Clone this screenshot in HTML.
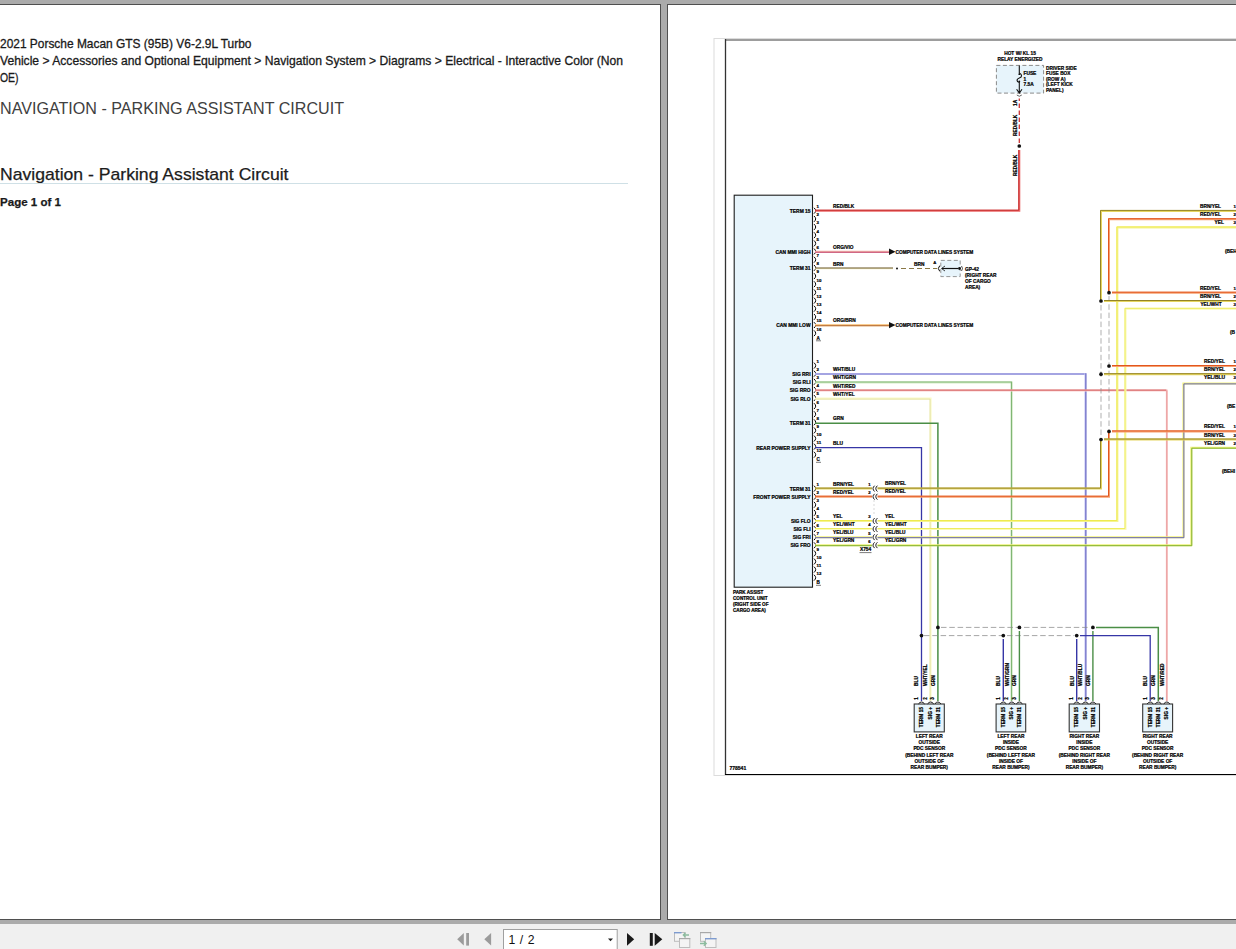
<!DOCTYPE html>
<html><head><meta charset="utf-8">
<style>
html,body{margin:0;padding:0;}
body{width:1236px;height:949px;overflow:hidden;position:relative;background:#ababab;font-family:"Liberation Sans", sans-serif;}
.pg{position:absolute;background:#fff;}
.dk{position:absolute;background:#4f4f4f;}
#tb{position:absolute;left:0;top:924px;width:1236px;height:25px;background:#f0f0f0;}
svg{position:absolute;left:0;top:0;}
svg text{font-family:"Liberation Sans", sans-serif;}
</style></head><body>
<div class="pg" style="left:0;top:5px;width:660px;height:914px"></div>
<div class="dk" style="left:0;top:4px;width:661px;height:1px"></div>
<div class="dk" style="left:660px;top:4px;width:1px;height:916px"></div>
<div class="dk" style="left:0;top:919px;width:661px;height:1px"></div>
<div class="pg" style="left:668px;top:5px;width:568px;height:914px"></div>
<div class="dk" style="left:667px;top:4px;width:569px;height:1px"></div>
<div class="dk" style="left:667px;top:4px;width:1px;height:916px"></div>
<div class="dk" style="left:667px;top:919px;width:569px;height:1px"></div>
<div id="tb"></div>
<svg width="1236" height="949" viewBox="0 0 1236 949">
<defs><clipPath id="pc"><rect x="668" y="5" width="568" height="914"/></clipPath></defs>
<g fill="#1a1a1a">
<text x="0" y="47.7" font-size="12.4" stroke="#1a1a1a" stroke-width="0.3" textLength="251.5" lengthAdjust="spacingAndGlyphs">2021 Porsche Macan GTS (95B) V6-2.9L Turbo</text>
<text x="0" y="64.7" font-size="12.4" stroke="#1a1a1a" stroke-width="0.3" textLength="623" lengthAdjust="spacingAndGlyphs">Vehicle &gt; Accessories and Optional Equipment &gt; Navigation System &gt; Diagrams &gt; Electrical - Interactive Color (Non</text>
<text x="0" y="82" font-size="12.4" stroke="#1a1a1a" stroke-width="0.3" textLength="18.5" lengthAdjust="spacingAndGlyphs">OE)</text>
<text x="0" y="113.7" font-size="16.6" fill="#404040" textLength="344" lengthAdjust="spacingAndGlyphs">NAVIGATION - PARKING ASSISTANT CIRCUIT</text>
<text x="0" y="179.8" font-size="16.6" fill="#1c1c1c" stroke="#1c1c1c" stroke-width="0.25" textLength="288.5" lengthAdjust="spacingAndGlyphs">Navigation - Parking Assistant Circuit</text>
<text x="0" y="205.7" font-size="11.2" font-weight="bold" fill="#1a1a1a" stroke="#1a1a1a" stroke-width="0.25" textLength="61" lengthAdjust="spacingAndGlyphs">Page 1 of 1</text>
</g>
<rect x="0" y="183" width="628" height="1" fill="#cfe0e6"/>
<g clip-path="url(#pc)">
<rect x="714" y="38.5" width="600" height="737" fill="none" stroke="#dcdcdc" stroke-width="1"/>
<rect x="725.5" y="39.5" width="600" height="735" fill="#fff" stroke="none"/>
<line x1="725.5" y1="39.9" x2="1240" y2="39.9" stroke="#7c7c7c" stroke-width="1.5" stroke-linecap="butt"/>
<line x1="725.5" y1="39" x2="725.5" y2="775.1" stroke="#333" stroke-width="1.3" stroke-linecap="butt"/>
<line x1="725" y1="774.5" x2="1240" y2="774.5" stroke="#000" stroke-width="1.15" stroke-linecap="butt"/>
<rect x="734.2" y="195.2" width="78.3" height="392" fill="#e7f4fb" stroke="#1e1e1e" stroke-width="1.1"/>
<text x="733" y="594" font-size="4.6" text-anchor="start" font-weight="bold" fill="#000" stroke="#000" stroke-width="0.22">PARK ASSIST</text>
<text x="733" y="600" font-size="4.6" text-anchor="start" font-weight="bold" fill="#000" stroke="#000" stroke-width="0.22">CONTROL UNIT</text>
<text x="733" y="606" font-size="4.6" text-anchor="start" font-weight="bold" fill="#000" stroke="#000" stroke-width="0.22">(RIGHT SIDE OF</text>
<text x="733" y="612" font-size="4.6" text-anchor="start" font-weight="bold" fill="#000" stroke="#000" stroke-width="0.22">CARGO AREA)</text>
<path d="M814.0,207.8 Q817.4,210.7 814.0,213.6" fill="none" stroke="#000" stroke-width="1.0"/>
<text x="816.5" y="208.1" font-size="4.4" text-anchor="start" font-weight="bold" fill="#000" stroke="#000" stroke-width="0.22">1</text>
<path d="M814.0,216.0 Q817.4,218.9 814.0,221.8" fill="none" stroke="#000" stroke-width="1.0"/>
<text x="816.5" y="216.26999999999998" font-size="4.4" text-anchor="start" font-weight="bold" fill="#000" stroke="#000" stroke-width="0.22">2</text>
<path d="M814.0,224.1 Q817.4,227.0 814.0,229.9" fill="none" stroke="#000" stroke-width="1.0"/>
<text x="816.5" y="224.44" font-size="4.4" text-anchor="start" font-weight="bold" fill="#000" stroke="#000" stroke-width="0.22">3</text>
<path d="M814.0,232.3 Q817.4,235.2 814.0,238.1" fill="none" stroke="#000" stroke-width="1.0"/>
<text x="816.5" y="232.60999999999999" font-size="4.4" text-anchor="start" font-weight="bold" fill="#000" stroke="#000" stroke-width="0.22">4</text>
<path d="M814.0,240.5 Q817.4,243.4 814.0,246.3" fill="none" stroke="#000" stroke-width="1.0"/>
<text x="816.5" y="240.78" font-size="4.4" text-anchor="start" font-weight="bold" fill="#000" stroke="#000" stroke-width="0.22">5</text>
<path d="M814.0,248.6 Q817.4,251.5 814.0,254.4" fill="none" stroke="#000" stroke-width="1.0"/>
<text x="816.5" y="248.95" font-size="4.4" text-anchor="start" font-weight="bold" fill="#000" stroke="#000" stroke-width="0.22">6</text>
<path d="M814.0,256.8 Q817.4,259.7 814.0,262.6" fill="none" stroke="#000" stroke-width="1.0"/>
<text x="816.5" y="257.11999999999995" font-size="4.4" text-anchor="start" font-weight="bold" fill="#000" stroke="#000" stroke-width="0.22">7</text>
<path d="M814.0,265.0 Q817.4,267.9 814.0,270.8" fill="none" stroke="#000" stroke-width="1.0"/>
<text x="816.5" y="265.28999999999996" font-size="4.4" text-anchor="start" font-weight="bold" fill="#000" stroke="#000" stroke-width="0.22">8</text>
<path d="M814.0,273.2 Q817.4,276.1 814.0,279.0" fill="none" stroke="#000" stroke-width="1.0"/>
<text x="816.5" y="273.46" font-size="4.4" text-anchor="start" font-weight="bold" fill="#000" stroke="#000" stroke-width="0.22">9</text>
<path d="M814.0,281.3 Q817.4,284.2 814.0,287.1" fill="none" stroke="#000" stroke-width="1.0"/>
<text x="816.5" y="281.63" font-size="4.4" text-anchor="start" font-weight="bold" fill="#000" stroke="#000" stroke-width="0.22">10</text>
<path d="M814.0,289.5 Q817.4,292.4 814.0,295.3" fill="none" stroke="#000" stroke-width="1.0"/>
<text x="816.5" y="289.79999999999995" font-size="4.4" text-anchor="start" font-weight="bold" fill="#000" stroke="#000" stroke-width="0.22">11</text>
<path d="M814.0,297.7 Q817.4,300.6 814.0,303.5" fill="none" stroke="#000" stroke-width="1.0"/>
<text x="816.5" y="297.96999999999997" font-size="4.4" text-anchor="start" font-weight="bold" fill="#000" stroke="#000" stroke-width="0.22">12</text>
<path d="M814.0,305.8 Q817.4,308.7 814.0,311.6" fill="none" stroke="#000" stroke-width="1.0"/>
<text x="816.5" y="306.14" font-size="4.4" text-anchor="start" font-weight="bold" fill="#000" stroke="#000" stroke-width="0.22">13</text>
<path d="M814.0,314.0 Q817.4,316.9 814.0,319.8" fill="none" stroke="#000" stroke-width="1.0"/>
<text x="816.5" y="314.30999999999995" font-size="4.4" text-anchor="start" font-weight="bold" fill="#000" stroke="#000" stroke-width="0.22">14</text>
<path d="M814.0,322.2 Q817.4,325.1 814.0,328.0" fill="none" stroke="#000" stroke-width="1.0"/>
<text x="816.5" y="322.47999999999996" font-size="4.4" text-anchor="start" font-weight="bold" fill="#000" stroke="#000" stroke-width="0.22">15</text>
<path d="M814.0,330.4 Q817.4,333.2 814.0,336.1" fill="none" stroke="#000" stroke-width="1.0"/>
<text x="816.5" y="330.65" font-size="4.4" text-anchor="start" font-weight="bold" fill="#000" stroke="#000" stroke-width="0.22">16</text>
<text x="816.5" y="339.95" font-size="4.6" text-anchor="start" font-weight="bold" fill="#000" stroke="#000" stroke-width="0.22">A</text>
<line x1="816" y1="340.8" x2="821" y2="340.8" stroke="#222" stroke-width="0.6"/>
<path d="M814.0,362.7 Q817.4,365.6 814.0,368.5" fill="none" stroke="#000" stroke-width="1.0"/>
<text x="816.5" y="363.0" font-size="4.4" text-anchor="start" font-weight="bold" fill="#000" stroke="#000" stroke-width="0.22">1</text>
<path d="M814.0,370.8 Q817.4,373.7 814.0,376.6" fill="none" stroke="#000" stroke-width="1.0"/>
<text x="816.5" y="371.1" font-size="4.4" text-anchor="start" font-weight="bold" fill="#000" stroke="#000" stroke-width="0.22">2</text>
<path d="M814.0,378.9 Q817.4,381.8 814.0,384.7" fill="none" stroke="#000" stroke-width="1.0"/>
<text x="816.5" y="379.2" font-size="4.4" text-anchor="start" font-weight="bold" fill="#000" stroke="#000" stroke-width="0.22">3</text>
<path d="M814.0,387.0 Q817.4,389.9 814.0,392.8" fill="none" stroke="#000" stroke-width="1.0"/>
<text x="816.5" y="387.3" font-size="4.4" text-anchor="start" font-weight="bold" fill="#000" stroke="#000" stroke-width="0.22">4</text>
<path d="M814.0,395.1 Q817.4,398.0 814.0,400.9" fill="none" stroke="#000" stroke-width="1.0"/>
<text x="816.5" y="395.4" font-size="4.4" text-anchor="start" font-weight="bold" fill="#000" stroke="#000" stroke-width="0.22">5</text>
<path d="M814.0,403.2 Q817.4,406.1 814.0,409.0" fill="none" stroke="#000" stroke-width="1.0"/>
<text x="816.5" y="403.5" font-size="4.4" text-anchor="start" font-weight="bold" fill="#000" stroke="#000" stroke-width="0.22">6</text>
<path d="M814.0,411.3 Q817.4,414.2 814.0,417.1" fill="none" stroke="#000" stroke-width="1.0"/>
<text x="816.5" y="411.6" font-size="4.4" text-anchor="start" font-weight="bold" fill="#000" stroke="#000" stroke-width="0.22">7</text>
<path d="M814.0,419.4 Q817.4,422.3 814.0,425.2" fill="none" stroke="#000" stroke-width="1.0"/>
<text x="816.5" y="419.7" font-size="4.4" text-anchor="start" font-weight="bold" fill="#000" stroke="#000" stroke-width="0.22">8</text>
<path d="M814.0,427.5 Q817.4,430.4 814.0,433.3" fill="none" stroke="#000" stroke-width="1.0"/>
<text x="816.5" y="427.8" font-size="4.4" text-anchor="start" font-weight="bold" fill="#000" stroke="#000" stroke-width="0.22">9</text>
<path d="M814.0,435.6 Q817.4,438.5 814.0,441.4" fill="none" stroke="#000" stroke-width="1.0"/>
<text x="816.5" y="435.9" font-size="4.4" text-anchor="start" font-weight="bold" fill="#000" stroke="#000" stroke-width="0.22">10</text>
<path d="M814.0,443.7 Q817.4,446.6 814.0,449.5" fill="none" stroke="#000" stroke-width="1.0"/>
<text x="816.5" y="444.0" font-size="4.4" text-anchor="start" font-weight="bold" fill="#000" stroke="#000" stroke-width="0.22">11</text>
<path d="M814.0,451.8 Q817.4,454.7 814.0,457.6" fill="none" stroke="#000" stroke-width="1.0"/>
<text x="816.5" y="452.1" font-size="4.4" text-anchor="start" font-weight="bold" fill="#000" stroke="#000" stroke-width="0.22">12</text>
<text x="816.5" y="461.40000000000003" font-size="4.6" text-anchor="start" font-weight="bold" fill="#000" stroke="#000" stroke-width="0.22">C</text>
<line x1="816" y1="462.3" x2="821" y2="462.3" stroke="#222" stroke-width="0.6"/>
<path d="M814.0,485.7 Q817.4,488.6 814.0,491.5" fill="none" stroke="#000" stroke-width="1.0"/>
<text x="816.5" y="486.0" font-size="4.4" text-anchor="start" font-weight="bold" fill="#000" stroke="#000" stroke-width="0.22">1</text>
<path d="M814.0,493.8 Q817.4,496.7 814.0,499.6" fill="none" stroke="#000" stroke-width="1.0"/>
<text x="816.5" y="494.1" font-size="4.4" text-anchor="start" font-weight="bold" fill="#000" stroke="#000" stroke-width="0.22">2</text>
<path d="M814.0,501.9 Q817.4,504.8 814.0,507.7" fill="none" stroke="#000" stroke-width="1.0"/>
<text x="816.5" y="502.2" font-size="4.4" text-anchor="start" font-weight="bold" fill="#000" stroke="#000" stroke-width="0.22">3</text>
<path d="M814.0,510.0 Q817.4,512.9 814.0,515.8" fill="none" stroke="#000" stroke-width="1.0"/>
<text x="816.5" y="510.29999999999995" font-size="4.4" text-anchor="start" font-weight="bold" fill="#000" stroke="#000" stroke-width="0.22">4</text>
<path d="M814.0,518.1 Q817.4,521.0 814.0,523.9" fill="none" stroke="#000" stroke-width="1.0"/>
<text x="816.5" y="518.4" font-size="4.4" text-anchor="start" font-weight="bold" fill="#000" stroke="#000" stroke-width="0.22">5</text>
<path d="M814.0,526.2 Q817.4,529.1 814.0,532.0" fill="none" stroke="#000" stroke-width="1.0"/>
<text x="816.5" y="526.5" font-size="4.4" text-anchor="start" font-weight="bold" fill="#000" stroke="#000" stroke-width="0.22">6</text>
<path d="M814.0,534.3 Q817.4,537.2 814.0,540.1" fill="none" stroke="#000" stroke-width="1.0"/>
<text x="816.5" y="534.6" font-size="4.4" text-anchor="start" font-weight="bold" fill="#000" stroke="#000" stroke-width="0.22">7</text>
<path d="M814.0,542.4 Q817.4,545.3 814.0,548.2" fill="none" stroke="#000" stroke-width="1.0"/>
<text x="816.5" y="542.7" font-size="4.4" text-anchor="start" font-weight="bold" fill="#000" stroke="#000" stroke-width="0.22">8</text>
<path d="M814.0,550.5 Q817.4,553.4 814.0,556.3" fill="none" stroke="#000" stroke-width="1.0"/>
<text x="816.5" y="550.8" font-size="4.4" text-anchor="start" font-weight="bold" fill="#000" stroke="#000" stroke-width="0.22">9</text>
<path d="M814.0,558.6 Q817.4,561.5 814.0,564.4" fill="none" stroke="#000" stroke-width="1.0"/>
<text x="816.5" y="558.9" font-size="4.4" text-anchor="start" font-weight="bold" fill="#000" stroke="#000" stroke-width="0.22">10</text>
<path d="M814.0,566.7 Q817.4,569.6 814.0,572.5" fill="none" stroke="#000" stroke-width="1.0"/>
<text x="816.5" y="567.0" font-size="4.4" text-anchor="start" font-weight="bold" fill="#000" stroke="#000" stroke-width="0.22">11</text>
<path d="M814.0,574.8 Q817.4,577.7 814.0,580.6" fill="none" stroke="#000" stroke-width="1.0"/>
<text x="816.5" y="575.1" font-size="4.4" text-anchor="start" font-weight="bold" fill="#000" stroke="#000" stroke-width="0.22">12</text>
<text x="816.5" y="584.4000000000001" font-size="4.6" text-anchor="start" font-weight="bold" fill="#000" stroke="#000" stroke-width="0.22">B</text>
<line x1="816" y1="585.3" x2="821" y2="585.3" stroke="#222" stroke-width="0.6"/>
<text x="810.5" y="212.6" font-size="4.9" text-anchor="end" font-weight="bold" fill="#000" stroke="#000" stroke-width="0.22">TERM 15</text>
<text x="810.5" y="253.70000000000002" font-size="4.9" text-anchor="end" font-weight="bold" fill="#000" stroke="#000" stroke-width="0.22">CAN MMI HIGH</text>
<text x="810.5" y="270.4" font-size="4.9" text-anchor="end" font-weight="bold" fill="#000" stroke="#000" stroke-width="0.22">TERM 31</text>
<text x="810.5" y="327.0" font-size="4.9" text-anchor="end" font-weight="bold" fill="#000" stroke="#000" stroke-width="0.22">CAN MMI LOW</text>
<text x="810.5" y="375.9" font-size="4.9" text-anchor="end" font-weight="bold" fill="#000" stroke="#000" stroke-width="0.22">SIG RRI</text>
<text x="810.5" y="384.29999999999995" font-size="4.9" text-anchor="end" font-weight="bold" fill="#000" stroke="#000" stroke-width="0.22">SIG RLI</text>
<text x="810.5" y="392.4" font-size="4.9" text-anchor="end" font-weight="bold" fill="#000" stroke="#000" stroke-width="0.22">SIG RRO</text>
<text x="810.5" y="400.5" font-size="4.9" text-anchor="end" font-weight="bold" fill="#000" stroke="#000" stroke-width="0.22">SIG RLO</text>
<text x="810.5" y="425.2" font-size="4.9" text-anchor="end" font-weight="bold" fill="#000" stroke="#000" stroke-width="0.22">TERM 31</text>
<text x="810.5" y="449.5" font-size="4.9" text-anchor="end" font-weight="bold" fill="#000" stroke="#000" stroke-width="0.22">REAR POWER SUPPLY</text>
<text x="810.5" y="490.5" font-size="4.9" text-anchor="end" font-weight="bold" fill="#000" stroke="#000" stroke-width="0.22">TERM 31</text>
<text x="810.5" y="498.59999999999997" font-size="4.9" text-anchor="end" font-weight="bold" fill="#000" stroke="#000" stroke-width="0.22">FRONT POWER SUPPLY</text>
<text x="810.5" y="522.9" font-size="4.9" text-anchor="end" font-weight="bold" fill="#000" stroke="#000" stroke-width="0.22">SIG FLO</text>
<text x="810.5" y="530.9" font-size="4.9" text-anchor="end" font-weight="bold" fill="#000" stroke="#000" stroke-width="0.22">SIG FLI</text>
<text x="810.5" y="539.1" font-size="4.9" text-anchor="end" font-weight="bold" fill="#000" stroke="#000" stroke-width="0.22">SIG FRI</text>
<text x="810.5" y="547.1" font-size="4.9" text-anchor="end" font-weight="bold" fill="#000" stroke="#000" stroke-width="0.22">SIG FRO</text>
<polyline points="815,210.7 1019.3,210.7 1019.3,150" fill="none" stroke="#ec6a6a" stroke-width="2.0" stroke-linejoin="miter"/>
<polyline points="815.0,210.2 1018.8,210.2 1018.8,150.0" fill="none" stroke="#c42a2a" stroke-width="1.0" stroke-linejoin="miter"/>
<line x1="1019.3" y1="143" x2="1019.3" y2="98.5" stroke="#cc3434" stroke-width="1.3" stroke-dasharray="4.5,2.5" stroke-linecap="butt"/>
<circle cx="1019.3" cy="146" r="1.85" fill="#111"/>
<text x="833" y="207.5" font-size="4.8" text-anchor="start" font-weight="bold" fill="#000" stroke="#000" stroke-width="0.22">RED/BLK</text>
<polyline points="815,251.8 889,251.8" fill="none" stroke="#f2b4a8" stroke-width="2.2" stroke-linejoin="miter"/>
<polyline points="815.0,252.3 889.0,252.3" fill="none" stroke="#c44e7a" stroke-width="1.1" stroke-linejoin="miter"/>
<path d="M889,248.6 L895.5,251.8 L889,255 Z" fill="#111"/>
<text x="895.5" y="253.8" font-size="4.8" text-anchor="start" font-weight="bold" fill="#000" stroke="#000" stroke-width="0.22">COMPUTER DATA LINES SYSTEM</text>
<text x="833" y="249" font-size="4.8" text-anchor="start" font-weight="bold" fill="#000" stroke="#000" stroke-width="0.22">ORG/VIO</text>
<polyline points="815,268.5 893,268.5" fill="none" stroke="#f4f0c4" stroke-width="1.6" stroke-linejoin="miter"/>
<polyline points="815.0,268.0 893.0,268.0" fill="none" stroke="#6a5830" stroke-width="1.1" stroke-linejoin="miter"/>
<circle cx="897" cy="268.5" r="1.0" fill="#111"/>
<line x1="901" y1="268.5" x2="937" y2="268.5" stroke="#8a7846" stroke-width="1.1" stroke-dasharray="5,3" stroke-linecap="butt"/>
<text x="833" y="265.5" font-size="4.8" text-anchor="start" font-weight="bold" fill="#000" stroke="#000" stroke-width="0.22">BRN</text>
<text x="914" y="266" font-size="4.8" text-anchor="start" font-weight="bold" fill="#000" stroke="#000" stroke-width="0.22">BRN</text>
<text x="933.2" y="264" font-size="4.2" text-anchor="start" font-weight="bold" fill="#000" stroke="#000" stroke-width="0.22">A</text>
<path d="M939.8,265.6 Q936.8,268.5 939.8,271.4" fill="none" stroke="#000" stroke-width="1.0"/>
<rect x="940.8" y="260.4" width="19.4" height="16.2" fill="#e7f4fb" stroke="#8a8a8a" stroke-width="0.9" stroke-dasharray="4,2.5"/>
<line x1="942" y1="268.5" x2="958" y2="268.5" stroke="#111" stroke-width="1.2" stroke-linecap="butt"/>
<path d="M945,266 L941.5,268.5 L945,271" fill="none" stroke="#111" stroke-width="0.8"/>
<circle cx="959.5" cy="268.5" r="1.4" fill="#111"/>
<path d="M961.5,266 Q963.5,268.5 961.5,271" fill="none" stroke="#222" stroke-width="0.8"/>
<text x="965" y="270.5" font-size="4.8" text-anchor="start" font-weight="bold" fill="#000" stroke="#000" stroke-width="0.22">GP-42</text>
<text x="965" y="276.6" font-size="4.8" text-anchor="start" font-weight="bold" fill="#000" stroke="#000" stroke-width="0.22">(RIGHT REAR</text>
<text x="965" y="282.7" font-size="4.8" text-anchor="start" font-weight="bold" fill="#000" stroke="#000" stroke-width="0.22">OF CARGO</text>
<text x="965" y="288.8" font-size="4.8" text-anchor="start" font-weight="bold" fill="#000" stroke="#000" stroke-width="0.22">AREA)</text>
<polyline points="815,325.1 889,325.1" fill="none" stroke="#f8cc90" stroke-width="2.2" stroke-linejoin="miter"/>
<polyline points="815.0,325.6 889.0,325.6" fill="none" stroke="#c27c42" stroke-width="1.2" stroke-linejoin="miter"/>
<path d="M889,321.9 L895.5,325.1 L889,328.3 Z" fill="#111"/>
<text x="895.5" y="327.1" font-size="4.8" text-anchor="start" font-weight="bold" fill="#000" stroke="#000" stroke-width="0.22">COMPUTER DATA LINES SYSTEM</text>
<text x="833" y="322" font-size="4.8" text-anchor="start" font-weight="bold" fill="#000" stroke="#000" stroke-width="0.22">ORG/BRN</text>
<polyline points="815,374 1085.4,374" fill="none" stroke="#a4a4e2" stroke-width="1.9" stroke-linejoin="miter"/>
<polyline points="1085.4,373.2 1085.4,701" fill="none" stroke="#c8c8f6" stroke-width="2.0" stroke-linejoin="miter"/>
<line x1="1085.9" y1="373.2" x2="1085.9" y2="701" stroke="#5858b8" stroke-width="1.0" stroke-linecap="butt"/>
<polyline points="815,382.4 1011.8,382.4 1011.8,701" fill="none" stroke="#d4ecc8" stroke-width="2.0" stroke-linejoin="miter"/>
<polyline points="815,382.0 1011.4,382.0 1011.4,701" fill="none" stroke="#7cb470" stroke-width="1.1" stroke-linejoin="miter"/>
<polyline points="815,390.5 1166.8,390.5 1166.8,701" fill="none" stroke="#fad0d0" stroke-width="2.0" stroke-linejoin="miter"/>
<polyline points="815,390.1 1166.4,390.1" fill="none" stroke="#d86a6a" stroke-width="1.1" stroke-linejoin="miter"/>
<line x1="1166.8" y1="390.5" x2="1166.8" y2="701" stroke="#eaa0a0" stroke-width="1.3" stroke-linecap="butt"/>
<polyline points="815,398.6 930.6,398.6 930.6,701" fill="none" stroke="#fafac8" stroke-width="2.0" stroke-linejoin="miter"/>
<polyline points="815.0,399.1 930.1,399.1 930.1,701.0" fill="none" stroke="#e4e2a6" stroke-width="1.0" stroke-linejoin="miter"/>
<polyline points="815,423.3 937.9,423.3 937.9,701" fill="none" stroke="#4a8e46" stroke-width="1.5" stroke-linejoin="miter"/>
<polyline points="815,447.6 921.5,447.6 921.5,701" fill="none" stroke="#3636a6" stroke-width="1.3" stroke-linejoin="miter"/>
<text x="833" y="370.5" font-size="4.8" text-anchor="start" font-weight="bold" fill="#000" stroke="#000" stroke-width="0.22">WHT/BLU</text>
<text x="833" y="379" font-size="4.8" text-anchor="start" font-weight="bold" fill="#000" stroke="#000" stroke-width="0.22">WHT/GRN</text>
<text x="833" y="387.5" font-size="4.8" text-anchor="start" font-weight="bold" fill="#000" stroke="#000" stroke-width="0.22">WHT/RED</text>
<text x="833" y="395.5" font-size="4.8" text-anchor="start" font-weight="bold" fill="#000" stroke="#000" stroke-width="0.22">WHT/YEL</text>
<text x="833" y="420" font-size="4.8" text-anchor="start" font-weight="bold" fill="#000" stroke="#000" stroke-width="0.22">GRN</text>
<text x="833" y="444.5" font-size="4.8" text-anchor="start" font-weight="bold" fill="#000" stroke="#000" stroke-width="0.22">BLU</text>
<polyline points="815,488.6 1101,488.6 1101,439.5" fill="none" stroke="#e6d660" stroke-width="2.0" stroke-linejoin="miter"/>
<polyline points="815.0,488.1 1100.5,488.1 1100.5,439.5" fill="none" stroke="#948428" stroke-width="1.0" stroke-linejoin="miter"/>
<polyline points="815,496.7 1109,496.7 1109,431.4" fill="none" stroke="#f6a070" stroke-width="2.0" stroke-linejoin="miter"/>
<polyline points="815.0,496.2 1108.5,496.2 1108.5,431.4" fill="none" stroke="#e2561e" stroke-width="1.0" stroke-linejoin="miter"/>
<polyline points="815,521 1117.4,521 1117.4,227.4 1240,227.4" fill="none" stroke="#f6f490" stroke-width="2.0" stroke-linejoin="miter"/>
<polyline points="815.0,520.5 1116.9,520.5 1116.9,226.9 1240.0,226.9" fill="none" stroke="#eeea50" stroke-width="1.0" stroke-linejoin="miter"/>
<polyline points="815,529 1125.5,529 1125.5,308.8 1240,308.8" fill="none" stroke="#fafab4" stroke-width="2.0" stroke-linejoin="miter"/>
<polyline points="815.0,528.5 1125.0,528.5 1125.0,308.3 1240.0,308.3" fill="none" stroke="#eeec60" stroke-width="1.0" stroke-linejoin="miter"/>
<polyline points="815,537.2 1183.4,537.2 1183.4,383.4 1240,383.4" fill="none" stroke="#f4f27a" stroke-width="2.0" stroke-linejoin="miter"/>
<polyline points="815.0,537.7 1183.9,537.7 1183.9,383.9 1240.0,383.9" fill="none" stroke="#6464b4" stroke-width="1.0" stroke-linejoin="miter"/>
<polyline points="815,545.2 1191.3,545.2 1191.3,447.7 1240,447.7" fill="none" stroke="#eef27a" stroke-width="2.0" stroke-linejoin="miter"/>
<polyline points="815.0,545.7 1191.8,545.7 1191.8,448.2 1240.0,448.2" fill="none" stroke="#80b030" stroke-width="1.0" stroke-linejoin="miter"/>
<line x1="1101" y1="305" x2="1101" y2="436" stroke="#8c8c8c" stroke-width="0.7" stroke-dasharray="5.5,2.8" stroke-linecap="butt"/>
<line x1="1109" y1="296" x2="1109" y2="428" stroke="#8c8c8c" stroke-width="0.7" stroke-dasharray="5.5,2.8" stroke-linecap="butt"/>
<polyline points="1101,301 1101,210.9 1240,210.9" fill="none" stroke="#e6d660" stroke-width="2.0" stroke-linejoin="miter"/>
<polyline points="1100.5,301.0 1100.5,210.4 1240.0,210.4" fill="none" stroke="#948428" stroke-width="1.0" stroke-linejoin="miter"/>
<polyline points="1109,292.7 1109,219.2 1240,219.2" fill="none" stroke="#f6a070" stroke-width="2.0" stroke-linejoin="miter"/>
<polyline points="1108.5,292.7 1108.5,218.7 1240.0,218.7" fill="none" stroke="#e2561e" stroke-width="1.0" stroke-linejoin="miter"/>
<polyline points="1104,301 1240,301" fill="none" stroke="#e6d660" stroke-width="2.0" stroke-linejoin="miter"/>
<polyline points="1104.0,300.5 1240.0,300.5" fill="none" stroke="#948428" stroke-width="1.0" stroke-linejoin="miter"/>
<circle cx="1101" cy="301" r="1.85" fill="#111"/>
<polyline points="1104,374.2 1240,374.2" fill="none" stroke="#e6d660" stroke-width="2.0" stroke-linejoin="miter"/>
<polyline points="1104.0,373.7 1240.0,373.7" fill="none" stroke="#948428" stroke-width="1.0" stroke-linejoin="miter"/>
<circle cx="1101" cy="374.2" r="1.85" fill="#111"/>
<polyline points="1104,439.5 1240,439.5" fill="none" stroke="#e6d660" stroke-width="2.0" stroke-linejoin="miter"/>
<polyline points="1104.0,439.0 1240.0,439.0" fill="none" stroke="#948428" stroke-width="1.0" stroke-linejoin="miter"/>
<circle cx="1101" cy="439.5" r="1.85" fill="#111"/>
<polyline points="1112,292.7 1240,292.7" fill="none" stroke="#f6a070" stroke-width="2.0" stroke-linejoin="miter"/>
<polyline points="1112.0,292.2 1240.0,292.2" fill="none" stroke="#e2561e" stroke-width="1.0" stroke-linejoin="miter"/>
<circle cx="1109" cy="292.7" r="1.85" fill="#111"/>
<polyline points="1112,366 1240,366" fill="none" stroke="#f6a070" stroke-width="2.0" stroke-linejoin="miter"/>
<polyline points="1112.0,365.5 1240.0,365.5" fill="none" stroke="#e2561e" stroke-width="1.0" stroke-linejoin="miter"/>
<circle cx="1109" cy="366" r="1.85" fill="#111"/>
<polyline points="1112,431.4 1240,431.4" fill="none" stroke="#f6a070" stroke-width="2.0" stroke-linejoin="miter"/>
<polyline points="1112.0,430.9 1240.0,430.9" fill="none" stroke="#e2561e" stroke-width="1.0" stroke-linejoin="miter"/>
<circle cx="1109" cy="431.4" r="1.85" fill="#111"/>
<text x="833" y="485.5" font-size="4.8" text-anchor="start" font-weight="bold" fill="#000" stroke="#000" stroke-width="0.22">BRN/YEL</text>
<text x="885" y="485.0" font-size="4.8" text-anchor="start" font-weight="bold" fill="#000" stroke="#000" stroke-width="0.22">BRN/YEL</text>
<text x="833" y="493.5" font-size="4.8" text-anchor="start" font-weight="bold" fill="#000" stroke="#000" stroke-width="0.22">RED/YEL</text>
<text x="885" y="493.0" font-size="4.8" text-anchor="start" font-weight="bold" fill="#000" stroke="#000" stroke-width="0.22">RED/YEL</text>
<text x="833" y="518" font-size="4.8" text-anchor="start" font-weight="bold" fill="#000" stroke="#000" stroke-width="0.22">YEL</text>
<text x="885" y="517.5" font-size="4.8" text-anchor="start" font-weight="bold" fill="#000" stroke="#000" stroke-width="0.22">YEL</text>
<text x="833" y="526" font-size="4.8" text-anchor="start" font-weight="bold" fill="#000" stroke="#000" stroke-width="0.22">YEL/WHT</text>
<text x="885" y="525.5" font-size="4.8" text-anchor="start" font-weight="bold" fill="#000" stroke="#000" stroke-width="0.22">YEL/WHT</text>
<text x="833" y="534.2" font-size="4.8" text-anchor="start" font-weight="bold" fill="#000" stroke="#000" stroke-width="0.22">YEL/BLU</text>
<text x="885" y="533.7" font-size="4.8" text-anchor="start" font-weight="bold" fill="#000" stroke="#000" stroke-width="0.22">YEL/BLU</text>
<text x="833" y="542.2" font-size="4.8" text-anchor="start" font-weight="bold" fill="#000" stroke="#000" stroke-width="0.22">YEL/GRN</text>
<text x="885" y="541.7" font-size="4.8" text-anchor="start" font-weight="bold" fill="#000" stroke="#000" stroke-width="0.22">YEL/GRN</text>
<text x="868.2" y="485.8" font-size="4.2" text-anchor="start" font-weight="bold" fill="#000" stroke="#000" stroke-width="0.22">1</text>
<text x="868.2" y="493.8" font-size="4.2" text-anchor="start" font-weight="bold" fill="#000" stroke="#000" stroke-width="0.22">2</text>
<text x="868.2" y="518.3" font-size="4.2" text-anchor="start" font-weight="bold" fill="#000" stroke="#000" stroke-width="0.22">3</text>
<text x="868.2" y="526.3" font-size="4.2" text-anchor="start" font-weight="bold" fill="#000" stroke="#000" stroke-width="0.22">4</text>
<text x="868.2" y="534.5" font-size="4.2" text-anchor="start" font-weight="bold" fill="#000" stroke="#000" stroke-width="0.22">5</text>
<text x="868.2" y="542.5" font-size="4.2" text-anchor="start" font-weight="bold" fill="#000" stroke="#000" stroke-width="0.22">6</text>
<rect x="872" y="487.1" width="5.5" height="3" fill="#fff"/>
<path d="M874.6,485.7 Q871.4,488.6 874.6,491.5 M877.4,485.7 Q874.2,488.6 877.4,491.5" fill="none" stroke="#000" stroke-width="0.9"/>
<rect x="872" y="495.2" width="5.5" height="3" fill="#fff"/>
<path d="M874.6,493.8 Q871.4,496.7 874.6,499.6 M877.4,493.8 Q874.2,496.7 877.4,499.6" fill="none" stroke="#000" stroke-width="0.9"/>
<rect x="872" y="519.5" width="5.5" height="3" fill="#fff"/>
<path d="M874.6,518.1 Q871.4,521.0 874.6,523.9 M877.4,518.1 Q874.2,521.0 877.4,523.9" fill="none" stroke="#000" stroke-width="0.9"/>
<rect x="872" y="527.5" width="5.5" height="3" fill="#fff"/>
<path d="M874.6,526.1 Q871.4,529.0 874.6,531.9 M877.4,526.1 Q874.2,529.0 877.4,531.9" fill="none" stroke="#000" stroke-width="0.9"/>
<rect x="872" y="535.7" width="5.5" height="3" fill="#fff"/>
<path d="M874.6,534.3 Q871.4,537.2 874.6,540.1 M877.4,534.3 Q874.2,537.2 877.4,540.1" fill="none" stroke="#000" stroke-width="0.9"/>
<rect x="872" y="543.7" width="5.5" height="3" fill="#fff"/>
<path d="M874.6,542.3 Q871.4,545.2 874.6,548.1 M877.4,542.3 Q874.2,545.2 877.4,548.1" fill="none" stroke="#000" stroke-width="0.9"/>
<line x1="874" y1="500" x2="874" y2="516" stroke="#c8c8c8" stroke-width="0.7" stroke-dasharray="2,2" stroke-linecap="butt"/>
<text x="860" y="551" font-size="4.8" text-anchor="start" font-weight="bold" fill="#000" stroke="#000" stroke-width="0.22">X754</text>
<line x1="859.5" y1="552.6" x2="871.5" y2="552.6" stroke="#222" stroke-width="0.6" stroke-linecap="butt"/>
<text x="1200" y="207.9" font-size="4.8" text-anchor="start" font-weight="bold" fill="#000" stroke="#000" stroke-width="0.22" textLength="21" lengthAdjust="spacingAndGlyphs">BRN/YEL</text>
<text x="1200" y="215.9" font-size="4.8" text-anchor="start" font-weight="bold" fill="#000" stroke="#000" stroke-width="0.22" textLength="21" lengthAdjust="spacingAndGlyphs">RED/YEL</text>
<text x="1200" y="289.9" font-size="4.8" text-anchor="start" font-weight="bold" fill="#000" stroke="#000" stroke-width="0.22" textLength="21" lengthAdjust="spacingAndGlyphs">RED/YEL</text>
<text x="1200" y="297.9" font-size="4.8" text-anchor="start" font-weight="bold" fill="#000" stroke="#000" stroke-width="0.22" textLength="21" lengthAdjust="spacingAndGlyphs">BRN/YEL</text>
<text x="1200.5" y="305.7" font-size="4.8" text-anchor="start" font-weight="bold" fill="#000" stroke="#000" stroke-width="0.22" textLength="21" lengthAdjust="spacingAndGlyphs">YEL/WHT</text>
<text x="1204" y="362.8" font-size="4.8" text-anchor="start" font-weight="bold" fill="#000" stroke="#000" stroke-width="0.22" textLength="21" lengthAdjust="spacingAndGlyphs">RED/YEL</text>
<text x="1204" y="370.8" font-size="4.8" text-anchor="start" font-weight="bold" fill="#000" stroke="#000" stroke-width="0.22" textLength="21" lengthAdjust="spacingAndGlyphs">BRN/YEL</text>
<text x="1204" y="379" font-size="4.8" text-anchor="start" font-weight="bold" fill="#000" stroke="#000" stroke-width="0.22" textLength="21" lengthAdjust="spacingAndGlyphs">YEL/BLU</text>
<text x="1204" y="427.9" font-size="4.8" text-anchor="start" font-weight="bold" fill="#000" stroke="#000" stroke-width="0.22" textLength="21" lengthAdjust="spacingAndGlyphs">RED/YEL</text>
<text x="1204" y="436.8" font-size="4.8" text-anchor="start" font-weight="bold" fill="#000" stroke="#000" stroke-width="0.22" textLength="21" lengthAdjust="spacingAndGlyphs">BRN/YEL</text>
<text x="1204" y="444.8" font-size="4.8" text-anchor="start" font-weight="bold" fill="#000" stroke="#000" stroke-width="0.22" textLength="21" lengthAdjust="spacingAndGlyphs">YEL/GRN</text>
<text x="1233.5" y="207.9" font-size="4.4" text-anchor="start" font-weight="bold" fill="#000" stroke="#000" stroke-width="0.22">1</text>
<text x="1233.5" y="215.9" font-size="4.4" text-anchor="start" font-weight="bold" fill="#000" stroke="#000" stroke-width="0.22">2</text>
<text x="1233.5" y="223.7" font-size="4.4" text-anchor="start" font-weight="bold" fill="#000" stroke="#000" stroke-width="0.22">3</text>
<text x="1233.5" y="289.9" font-size="4.4" text-anchor="start" font-weight="bold" fill="#000" stroke="#000" stroke-width="0.22">1</text>
<text x="1233.5" y="297.9" font-size="4.4" text-anchor="start" font-weight="bold" fill="#000" stroke="#000" stroke-width="0.22">2</text>
<text x="1233.5" y="305.7" font-size="4.4" text-anchor="start" font-weight="bold" fill="#000" stroke="#000" stroke-width="0.22">3</text>
<text x="1233.5" y="362.8" font-size="4.4" text-anchor="start" font-weight="bold" fill="#000" stroke="#000" stroke-width="0.22">1</text>
<text x="1233.5" y="370.8" font-size="4.4" text-anchor="start" font-weight="bold" fill="#000" stroke="#000" stroke-width="0.22">2</text>
<text x="1233.5" y="379" font-size="4.4" text-anchor="start" font-weight="bold" fill="#000" stroke="#000" stroke-width="0.22">3</text>
<text x="1233.5" y="427.9" font-size="4.4" text-anchor="start" font-weight="bold" fill="#000" stroke="#000" stroke-width="0.22">1</text>
<text x="1233.5" y="436.8" font-size="4.4" text-anchor="start" font-weight="bold" fill="#000" stroke="#000" stroke-width="0.22">3</text>
<text x="1233.5" y="444.8" font-size="4.4" text-anchor="start" font-weight="bold" fill="#000" stroke="#000" stroke-width="0.22">2</text>
<text x="1223.9" y="223.7" font-size="4.8" text-anchor="end" font-weight="bold" fill="#000" stroke="#000" stroke-width="0.22">YEL</text>
<text x="1225" y="252.5" font-size="4.8" text-anchor="start" font-weight="bold" fill="#000" stroke="#000" stroke-width="0.22">(BEH</text>
<text x="1230" y="333.5" font-size="4.8" text-anchor="start" font-weight="bold" fill="#000" stroke="#000" stroke-width="0.22">(B</text>
<text x="1227" y="407.5" font-size="4.8" text-anchor="start" font-weight="bold" fill="#000" stroke="#000" stroke-width="0.22">(BE</text>
<text x="1222" y="472.5" font-size="4.8" text-anchor="start" font-weight="bold" fill="#000" stroke="#000" stroke-width="0.22">(BEHI</text>
<line x1="941" y1="627.4" x2="1090" y2="627.4" stroke="#888" stroke-width="0.75" stroke-dasharray="5.5,2.8" stroke-linecap="butt"/>
<line x1="924" y1="635.6" x2="1074" y2="635.6" stroke="#888" stroke-width="0.75" stroke-dasharray="5.5,2.8" stroke-linecap="butt"/>
<circle cx="937.9" cy="627.4" r="1.85" fill="#111"/>
<circle cx="921.5" cy="635.6" r="1.85" fill="#111"/>
<circle cx="1019.4" cy="627.4" r="1.85" fill="#111"/>
<circle cx="1003.3" cy="635.6" r="1.85" fill="#111"/>
<circle cx="1092.9" cy="627.4" r="1.85" fill="#111"/>
<circle cx="1076.7" cy="635.6" r="1.85" fill="#111"/>
<line x1="1003.3" y1="639" x2="1003.3" y2="701" stroke="#3636a6" stroke-width="1.4" stroke-linecap="butt"/>
<line x1="1019.4" y1="631" x2="1019.4" y2="701" stroke="#4a8e46" stroke-width="1.4" stroke-linecap="butt"/>
<line x1="1076.7" y1="639" x2="1076.7" y2="701" stroke="#3636a6" stroke-width="1.4" stroke-linecap="butt"/>
<line x1="1092.9" y1="631" x2="1092.9" y2="701" stroke="#4a8e46" stroke-width="1.4" stroke-linecap="butt"/>
<polyline points="1080,635.6 1150.2,635.6 1150.2,701" fill="none" stroke="#3636a6" stroke-width="1.3" stroke-linejoin="miter"/>
<polyline points="1096,627.4 1158.3,627.4 1158.3,701" fill="none" stroke="#4a8e46" stroke-width="1.5" stroke-linejoin="miter"/>
<rect x="914.2" y="704" width="30.09999999999991" height="27.9" fill="#e7f4fb" stroke="#333" stroke-width="1.1"/>
<path d="M918.5,703.8 Q921.5,700.2 924.5,703.8" fill="none" stroke="#000" stroke-width="0.9"/>
<path d="M927.6,703.8 Q930.6,700.2 933.6,703.8" fill="none" stroke="#000" stroke-width="0.9"/>
<path d="M934.9,703.8 Q937.9,700.2 940.9,703.8" fill="none" stroke="#000" stroke-width="0.9"/>
<text transform="translate(917.9,699.8) rotate(-90)" font-size="4.6" font-weight="bold" fill="#000" stroke="#000" stroke-width="0.22">1</text>
<text transform="translate(918.3,686) rotate(-90)" font-size="4.8" font-weight="bold" fill="#000" stroke="#000" stroke-width="0.22">BLU</text>
<text transform="translate(923.1,707) rotate(-90)" text-anchor="end" font-size="4.8" font-weight="bold" fill="#000" stroke="#000" stroke-width="0.22">TERM 15</text>
<text transform="translate(927.0,699.8) rotate(-90)" font-size="4.6" font-weight="bold" fill="#000" stroke="#000" stroke-width="0.22">2</text>
<text transform="translate(927.4,686) rotate(-90)" font-size="4.8" font-weight="bold" fill="#000" stroke="#000" stroke-width="0.22">WHT/YEL</text>
<text transform="translate(932.2,707) rotate(-90)" text-anchor="end" font-size="4.8" font-weight="bold" fill="#000" stroke="#000" stroke-width="0.22">SIG +</text>
<text transform="translate(934.3,699.8) rotate(-90)" font-size="4.6" font-weight="bold" fill="#000" stroke="#000" stroke-width="0.22">3</text>
<text transform="translate(934.6999999999999,686) rotate(-90)" font-size="4.8" font-weight="bold" fill="#000" stroke="#000" stroke-width="0.22">GRN</text>
<text transform="translate(939.5,707) rotate(-90)" text-anchor="end" font-size="4.8" font-weight="bold" fill="#000" stroke="#000" stroke-width="0.22">TERM 31</text>
<text x="929.25" y="738.2" font-size="4.8" text-anchor="middle" font-weight="bold" fill="#000" stroke="#000" stroke-width="0.22">LEFT REAR</text>
<text x="929.25" y="744.3000000000001" font-size="4.8" text-anchor="middle" font-weight="bold" fill="#000" stroke="#000" stroke-width="0.22">OUTSIDE</text>
<text x="929.25" y="750.4000000000001" font-size="4.8" text-anchor="middle" font-weight="bold" fill="#000" stroke="#000" stroke-width="0.22">PDC SENSOR</text>
<text x="929.25" y="756.5" font-size="4.8" text-anchor="middle" font-weight="bold" fill="#000" stroke="#000" stroke-width="0.22">(BEHIND LEFT REAR</text>
<text x="929.25" y="762.6" font-size="4.8" text-anchor="middle" font-weight="bold" fill="#000" stroke="#000" stroke-width="0.22">OUTSIDE OF</text>
<text x="929.25" y="768.7" font-size="4.8" text-anchor="middle" font-weight="bold" fill="#000" stroke="#000" stroke-width="0.22">REAR BUMPER)</text>
<rect x="996.1" y="704" width="29.600000000000023" height="27.9" fill="#e7f4fb" stroke="#333" stroke-width="1.1"/>
<path d="M1000.3,703.8 Q1003.3,700.2 1006.3,703.8" fill="none" stroke="#000" stroke-width="0.9"/>
<path d="M1008.8,703.8 Q1011.8,700.2 1014.8,703.8" fill="none" stroke="#000" stroke-width="0.9"/>
<path d="M1016.4,703.8 Q1019.4,700.2 1022.4,703.8" fill="none" stroke="#000" stroke-width="0.9"/>
<text transform="translate(999.6999999999999,699.8) rotate(-90)" font-size="4.6" font-weight="bold" fill="#000" stroke="#000" stroke-width="0.22">1</text>
<text transform="translate(1000.0999999999999,686) rotate(-90)" font-size="4.8" font-weight="bold" fill="#000" stroke="#000" stroke-width="0.22">BLU</text>
<text transform="translate(1004.9,707) rotate(-90)" text-anchor="end" font-size="4.8" font-weight="bold" fill="#000" stroke="#000" stroke-width="0.22">TERM 15</text>
<text transform="translate(1008.1999999999999,699.8) rotate(-90)" font-size="4.6" font-weight="bold" fill="#000" stroke="#000" stroke-width="0.22">2</text>
<text transform="translate(1008.5999999999999,686) rotate(-90)" font-size="4.8" font-weight="bold" fill="#000" stroke="#000" stroke-width="0.22">WHT/GRN</text>
<text transform="translate(1013.4,707) rotate(-90)" text-anchor="end" font-size="4.8" font-weight="bold" fill="#000" stroke="#000" stroke-width="0.22">SIG +</text>
<text transform="translate(1015.8,699.8) rotate(-90)" font-size="4.6" font-weight="bold" fill="#000" stroke="#000" stroke-width="0.22">3</text>
<text transform="translate(1016.1999999999999,686) rotate(-90)" font-size="4.8" font-weight="bold" fill="#000" stroke="#000" stroke-width="0.22">GRN</text>
<text transform="translate(1021.0,707) rotate(-90)" text-anchor="end" font-size="4.8" font-weight="bold" fill="#000" stroke="#000" stroke-width="0.22">TERM 31</text>
<text x="1010.9000000000001" y="738.2" font-size="4.8" text-anchor="middle" font-weight="bold" fill="#000" stroke="#000" stroke-width="0.22">LEFT REAR</text>
<text x="1010.9000000000001" y="744.3000000000001" font-size="4.8" text-anchor="middle" font-weight="bold" fill="#000" stroke="#000" stroke-width="0.22">INSIDE</text>
<text x="1010.9000000000001" y="750.4000000000001" font-size="4.8" text-anchor="middle" font-weight="bold" fill="#000" stroke="#000" stroke-width="0.22">PDC SENSOR</text>
<text x="1010.9000000000001" y="756.5" font-size="4.8" text-anchor="middle" font-weight="bold" fill="#000" stroke="#000" stroke-width="0.22">(BEHIND LEFT REAR</text>
<text x="1010.9000000000001" y="762.6" font-size="4.8" text-anchor="middle" font-weight="bold" fill="#000" stroke="#000" stroke-width="0.22">INSIDE OF</text>
<text x="1010.9000000000001" y="768.7" font-size="4.8" text-anchor="middle" font-weight="bold" fill="#000" stroke="#000" stroke-width="0.22">REAR BUMPER)</text>
<rect x="1069.2" y="704" width="30.299999999999955" height="27.9" fill="#e7f4fb" stroke="#333" stroke-width="1.1"/>
<path d="M1073.7,703.8 Q1076.7,700.2 1079.7,703.8" fill="none" stroke="#000" stroke-width="0.9"/>
<path d="M1082.4,703.8 Q1085.4,700.2 1088.4,703.8" fill="none" stroke="#000" stroke-width="0.9"/>
<path d="M1089.9,703.8 Q1092.9,700.2 1095.9,703.8" fill="none" stroke="#000" stroke-width="0.9"/>
<text transform="translate(1073.1000000000001,699.8) rotate(-90)" font-size="4.6" font-weight="bold" fill="#000" stroke="#000" stroke-width="0.22">1</text>
<text transform="translate(1073.5,686) rotate(-90)" font-size="4.8" font-weight="bold" fill="#000" stroke="#000" stroke-width="0.22">BLU</text>
<text transform="translate(1078.3,707) rotate(-90)" text-anchor="end" font-size="4.8" font-weight="bold" fill="#000" stroke="#000" stroke-width="0.22">TERM 15</text>
<text transform="translate(1081.8000000000002,699.8) rotate(-90)" font-size="4.6" font-weight="bold" fill="#000" stroke="#000" stroke-width="0.22">2</text>
<text transform="translate(1082.2,686) rotate(-90)" font-size="4.8" font-weight="bold" fill="#000" stroke="#000" stroke-width="0.22">WHT/BLU</text>
<text transform="translate(1087.0,707) rotate(-90)" text-anchor="end" font-size="4.8" font-weight="bold" fill="#000" stroke="#000" stroke-width="0.22">SIG +</text>
<text transform="translate(1089.3000000000002,699.8) rotate(-90)" font-size="4.6" font-weight="bold" fill="#000" stroke="#000" stroke-width="0.22">3</text>
<text transform="translate(1089.7,686) rotate(-90)" font-size="4.8" font-weight="bold" fill="#000" stroke="#000" stroke-width="0.22">GRN</text>
<text transform="translate(1094.5,707) rotate(-90)" text-anchor="end" font-size="4.8" font-weight="bold" fill="#000" stroke="#000" stroke-width="0.22">TERM 31</text>
<text x="1084.35" y="738.2" font-size="4.8" text-anchor="middle" font-weight="bold" fill="#000" stroke="#000" stroke-width="0.22">RIGHT REAR</text>
<text x="1084.35" y="744.3000000000001" font-size="4.8" text-anchor="middle" font-weight="bold" fill="#000" stroke="#000" stroke-width="0.22">INSIDE</text>
<text x="1084.35" y="750.4000000000001" font-size="4.8" text-anchor="middle" font-weight="bold" fill="#000" stroke="#000" stroke-width="0.22">PDC SENSOR</text>
<text x="1084.35" y="756.5" font-size="4.8" text-anchor="middle" font-weight="bold" fill="#000" stroke="#000" stroke-width="0.22">(BEHIND RIGHT REAR</text>
<text x="1084.35" y="762.6" font-size="4.8" text-anchor="middle" font-weight="bold" fill="#000" stroke="#000" stroke-width="0.22">INSIDE OF</text>
<text x="1084.35" y="768.7" font-size="4.8" text-anchor="middle" font-weight="bold" fill="#000" stroke="#000" stroke-width="0.22">REAR BUMPER)</text>
<rect x="1142.7" y="704" width="29.899999999999864" height="27.9" fill="#e7f4fb" stroke="#333" stroke-width="1.1"/>
<path d="M1147.2,703.8 Q1150.2,700.2 1153.2,703.8" fill="none" stroke="#000" stroke-width="0.9"/>
<path d="M1155.3,703.8 Q1158.3,700.2 1161.3,703.8" fill="none" stroke="#000" stroke-width="0.9"/>
<path d="M1163.8,703.8 Q1166.8,700.2 1169.8,703.8" fill="none" stroke="#000" stroke-width="0.9"/>
<text transform="translate(1146.6000000000001,699.8) rotate(-90)" font-size="4.6" font-weight="bold" fill="#000" stroke="#000" stroke-width="0.22">1</text>
<text transform="translate(1147.0,686) rotate(-90)" font-size="4.8" font-weight="bold" fill="#000" stroke="#000" stroke-width="0.22">BLU</text>
<text transform="translate(1151.8,707) rotate(-90)" text-anchor="end" font-size="4.8" font-weight="bold" fill="#000" stroke="#000" stroke-width="0.22">TERM 15</text>
<text transform="translate(1154.7,699.8) rotate(-90)" font-size="4.6" font-weight="bold" fill="#000" stroke="#000" stroke-width="0.22">3</text>
<text transform="translate(1155.1,686) rotate(-90)" font-size="4.8" font-weight="bold" fill="#000" stroke="#000" stroke-width="0.22">GRN</text>
<text transform="translate(1159.8999999999999,707) rotate(-90)" text-anchor="end" font-size="4.8" font-weight="bold" fill="#000" stroke="#000" stroke-width="0.22">TERM 31</text>
<text transform="translate(1163.2,699.8) rotate(-90)" font-size="4.6" font-weight="bold" fill="#000" stroke="#000" stroke-width="0.22">2</text>
<text transform="translate(1163.6,686) rotate(-90)" font-size="4.8" font-weight="bold" fill="#000" stroke="#000" stroke-width="0.22">WHT/RED</text>
<text transform="translate(1168.3999999999999,707) rotate(-90)" text-anchor="end" font-size="4.8" font-weight="bold" fill="#000" stroke="#000" stroke-width="0.22">SIG +</text>
<text x="1157.65" y="738.2" font-size="4.8" text-anchor="middle" font-weight="bold" fill="#000" stroke="#000" stroke-width="0.22">RIGHT REAR</text>
<text x="1157.65" y="744.3000000000001" font-size="4.8" text-anchor="middle" font-weight="bold" fill="#000" stroke="#000" stroke-width="0.22">OUTSIDE</text>
<text x="1157.65" y="750.4000000000001" font-size="4.8" text-anchor="middle" font-weight="bold" fill="#000" stroke="#000" stroke-width="0.22">PDC SENSOR</text>
<text x="1157.65" y="756.5" font-size="4.8" text-anchor="middle" font-weight="bold" fill="#000" stroke="#000" stroke-width="0.22">(BEHIND RIGHT REAR</text>
<text x="1157.65" y="762.6" font-size="4.8" text-anchor="middle" font-weight="bold" fill="#000" stroke="#000" stroke-width="0.22">OUTSIDE OF</text>
<text x="1157.65" y="768.7" font-size="4.8" text-anchor="middle" font-weight="bold" fill="#000" stroke="#000" stroke-width="0.22">REAR BUMPER)</text>
<text x="1020" y="55" font-size="4.8" text-anchor="middle" font-weight="bold" fill="#000" stroke="#000" stroke-width="0.22">HOT W/ KL 15</text>
<text x="1020" y="61" font-size="4.8" text-anchor="middle" font-weight="bold" fill="#000" stroke="#000" stroke-width="0.22">RELAY ENERGIZED</text>
<rect x="996.4" y="65.4" width="47.2" height="27.7" fill="#e7f4fb" stroke="#8a8a8a" stroke-width="1.0" stroke-dasharray="4,2.5"/>
<path d="M1019.3,65.4 L1019.3,73 C1022.3,74.5 1022.3,77 1019.3,78 C1016.3,79 1016.3,81.5 1019.3,82.5 L1019.3,92.5 M1016.6,89.3 L1019.3,93 L1022,89.3" fill="none" stroke="#111" stroke-width="1.1"/>
<circle cx="1019.3" cy="74.2" r="0.9" fill="#111"/>
<circle cx="1019.3" cy="81.5" r="0.9" fill="#111"/>
<text x="1023.5" y="75.0" font-size="4.8" text-anchor="start" font-weight="bold" fill="#000" stroke="#000" stroke-width="0.22">FUSE</text>
<text x="1023.5" y="80.6" font-size="4.8" text-anchor="start" font-weight="bold" fill="#000" stroke="#000" stroke-width="0.22">1</text>
<text x="1023.5" y="86.2" font-size="4.8" text-anchor="start" font-weight="bold" fill="#000" stroke="#000" stroke-width="0.22">7.5A</text>
<text x="1046" y="69.5" font-size="4.8" text-anchor="start" font-weight="bold" fill="#000" stroke="#000" stroke-width="0.22">DRIVER SIDE</text>
<text x="1046" y="75.1" font-size="4.8" text-anchor="start" font-weight="bold" fill="#000" stroke="#000" stroke-width="0.22">FUSE BOX</text>
<text x="1046" y="80.7" font-size="4.8" text-anchor="start" font-weight="bold" fill="#000" stroke="#000" stroke-width="0.22">(ROW A)</text>
<text x="1046" y="86.3" font-size="4.8" text-anchor="start" font-weight="bold" fill="#000" stroke="#000" stroke-width="0.22">(LEFT KICK</text>
<text x="1046" y="91.9" font-size="4.8" text-anchor="start" font-weight="bold" fill="#000" stroke="#000" stroke-width="0.22">PANEL)</text>
<path d="M1016.8,95 Q1019.3,97.5 1021.8,95" fill="none" stroke="#222" stroke-width="0.7"/>
<text transform="translate(1016.5,106) rotate(-90)" font-size="4.8" font-weight="bold" fill="#000" stroke="#000" stroke-width="0.22">1A</text>
<text transform="translate(1016.5,136) rotate(-90)" font-size="4.8" font-weight="bold" fill="#000" stroke="#000" stroke-width="0.22">RED/BLK</text>
<text transform="translate(1016.5,176) rotate(-90)" font-size="4.8" font-weight="bold" fill="#000" stroke="#000" stroke-width="0.22">RED/BLK</text>
<text x="729.5" y="770" font-size="5" text-anchor="start" font-weight="bold" fill="#000" stroke="#000" stroke-width="0.22">778541</text>
</g>
<!-- toolbar -->
<g>
<path d="M457.2,939.3 L463.8,933 L463.8,945.6 Z" fill="#9b9b9b"/>
<rect x="466.2" y="933" width="2.8" height="12.6" fill="#9b9b9b"/>
<path d="M484.3,939.3 L491.1,933 L491.1,945.6 Z" fill="#9b9b9b"/>
<rect x="503.5" y="929.5" width="113.7" height="22" fill="#fff" stroke="#a0a0a0" stroke-width="1"/>
<text x="508.5" y="943.8" font-size="12.2" fill="#111" textLength="26" lengthAdjust="spacing">1 / 2</text>
<path d="M608,938.5 L613,938.5 L610.5,941.3 Z" fill="#222"/>
<path d="M627,933 L634.2,939.3 L627,945.8 Z" fill="#1a1a1a"/>
<rect x="649.8" y="933" width="3" height="12.8" fill="#1a1a1a"/>
<path d="M654.7,933 L662.3,939.3 L654.7,945.8 Z" fill="#1a1a1a"/>
<rect x="674.5" y="932.5" width="10.5" height="8.8" fill="#f4f4f4" stroke="#bdbdbd" stroke-width="1"/>
<rect x="674" y="932" width="7.5" height="1.4" fill="#7d9bd0"/>
<rect x="679.5" y="938.5" width="10.3" height="9" fill="#f4f4f4" stroke="#bdbdbd" stroke-width="1"/>
<rect x="679" y="938" width="11.3" height="1.2" fill="#a8a8a8"/>
<path d="M683.5,935 L689,935 M685.5,932.8 L683.3,935 L685.5,937.2" fill="none" stroke="#8cbc9e" stroke-width="1.3"/>
<rect x="700.5" y="932.5" width="10.2" height="8.8" fill="#f4f4f4" stroke="#bdbdbd" stroke-width="1"/>
<rect x="700" y="932" width="11.2" height="1.2" fill="#a8a8a8"/>
<rect x="705.5" y="938.5" width="10.5" height="9" fill="#f4f4f4" stroke="#bdbdbd" stroke-width="1"/>
<rect x="705" y="938" width="11.5" height="1.4" fill="#7d9bd0"/>
<path d="M700,943.5 L706,943.5 M703.8,941.3 L706.2,943.5 L703.8,945.7" fill="none" stroke="#8cbc9e" stroke-width="1.3"/>
</g>
</svg>
</body></html>
